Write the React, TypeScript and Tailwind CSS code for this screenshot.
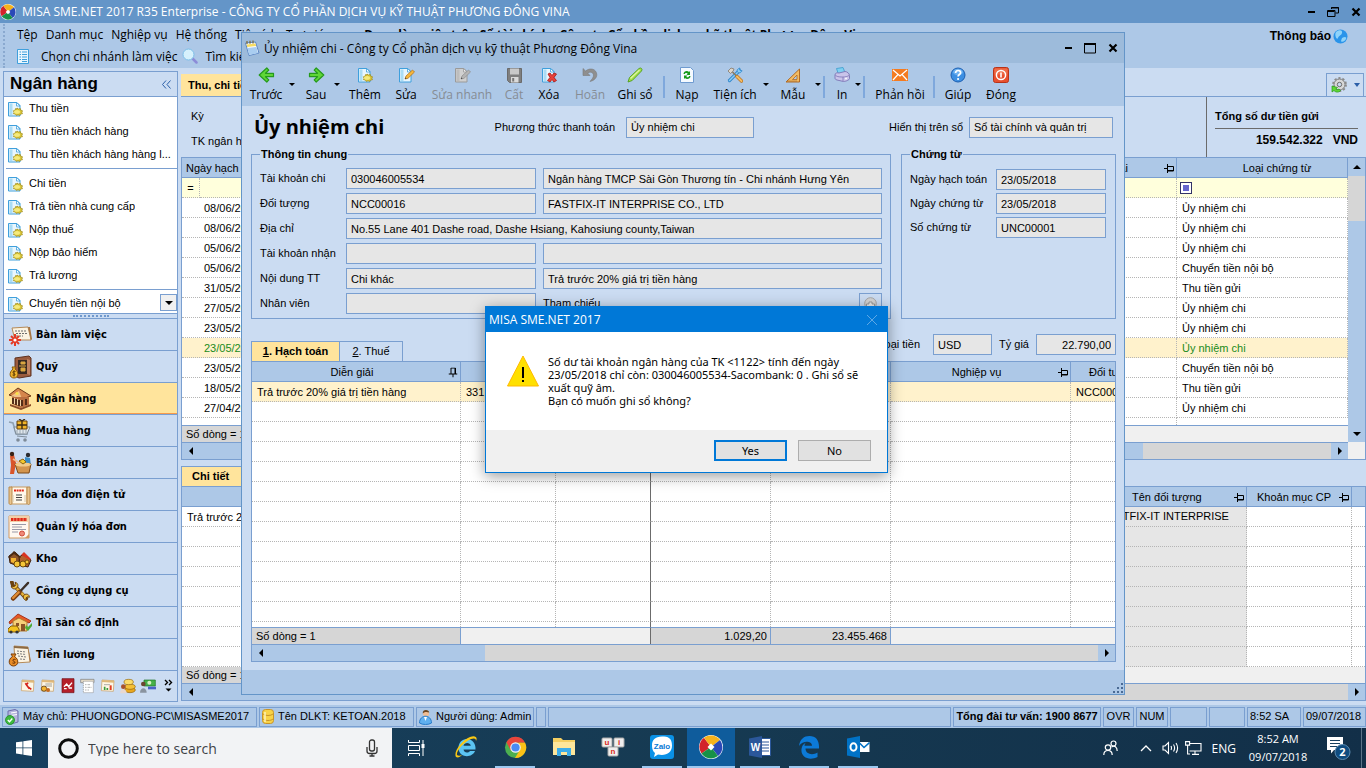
import React from "react";
import clsx from "clsx";

/* ---------- icons ---------- */

const DocBase = ({ gray = false }: { gray?: boolean }) => (
    <>
        <path d="M1.5 1.5h8.5l3 3v10.500h-11.500z" fill={gray ? "#d0d0d0" : "#e9f6fd"} stroke={gray ? "#9a9a9a" : "#3f9fdc"} />
        <path d="M2.500 2.500h3v11.500h-3z" fill={gray ? "#bdbdbd" : "#aadcf5"} />
        <path d="M9.500 1.500v3.500h3.500z" fill={gray ? "#eee" : "#fff"} stroke={gray ? "#9a9a9a" : "#3f9fdc"} strokeWidth=".8" />
    </>
);

const DocGear = ({ size = 16 }: { size?: number }) => (
    <svg width={size} height={size} viewBox="0 0 16 16" className="shrink-0">
        <DocBase />
        <path d="M10 7l1.400 1 2-.4.300 1.600 1.900.6-.8 1.400.7 1.500-2 .4-.8 1.300-1.700-.6-1.700.6-.9-1.300-2-.4.7-1.500-.8-1.400 1.900-.6.300-1.600 1.500.4z" fill="#dcc838" stroke="#9c8818" strokeWidth=".7" />
        <ellipse cx="10" cy="10.900" rx="3" ry="1.800" fill="#f5ea7c" />
    </svg>
);

const DocPencil = ({ gray = false }: { gray?: boolean }) => (
    <svg width="17" height="16" viewBox="0 0 17 16">
        <DocBase gray={gray} />
        <path d="M7 12l1-3 6.500-6 2 2-6.500 6.300z" fill={gray ? "#b5b5b5" : "#f6b73c"} stroke={gray ? "#8d8d8d" : "#b06a12"} strokeWidth=".7" />
        <path d="M7 12l.500-1.500 1 1z" fill="#333" />
    </svg>
);

const GreenArrow = ({ flip = false }: { flip?: boolean }) => (
    <svg width="17" height="16" viewBox="0 0 17 16" className={flip ? "-scale-x-100" : ""}>
        <path d="M15.500 6.300H7.500l3.300-3.200L8.800 1 1.200 8l7.600 7 2-2.100-3.300-3.200h8z" fill="#5fd636" stroke="#259a1c" strokeWidth="1.200" strokeLinejoin="round" />
    </svg>
);

const Floppy = () => (
    <svg width="15" height="15" viewBox="0 0 15 15">
        <path d="M.5.500h14v14h-12l-2-2z" fill="#7f7f7f" stroke="#6b6b6b" />
        <path d="M3 .500h9v6H3z" fill="#c9c9c9" />
        <path d="M4 9h7.500v5.500H4z" fill="#dadada" />
        <path d="M5.200 10h2v3.500h-2z" fill="#777" />
    </svg>
);

const DocDelete = () => (
    <svg width="16" height="16" viewBox="0 0 16 16">
        <DocBase />
        <path d="M7 7l2-1 2 2.500L13 6l2.500 1-2.500 3.500 2.500 3-2.500 1.500-2-2.500L9 15l-2.500-1.500 2.500-3z" fill="#e8413a" stroke="#a81814" strokeWidth=".8" />
    </svg>
);

const Undo = () => (
    <svg width="16" height="16" viewBox="0 0 16 16">
        <path d="M1 1.500v7h7L5.800 6.200c2-2 5.500-1 5.700 1.800.1 2.500-1.500 4-3.500 6.500 4.500-1 7-4 6.800-7C14.500 2 8 .2 3.600 4z" fill="#8f8f8f" stroke="#7a7a7a" strokeWidth=".6" />
    </svg>
);

const GreenPencil = () => (
    <svg width="16" height="16" viewBox="0 0 16 16">
        <path d="M1 15l1.500-4.500L12 1.500q1.500-1 2.500 0t0 2.500L5.200 13.500z" fill="#a4e04a" stroke="#4f9d1c" strokeWidth=".9" />
        <path d="M3.500 11.500l9-8.500" stroke="#dff5a8" strokeWidth="1.200" />
    </svg>
);

const Refresh = () => (
    <svg width="14" height="16" viewBox="0 0 14 16">
        <path d="M.5.500h10l3 3v12H.5z" fill="#f5faff" stroke="#6f9bd0" />
        <path d="M3.500 7c0-3 4-4 5.500-2l1-1v4H6.500l1.200-1.200C6.800 5.500 5 6 5 7z" fill="#159a1a" />
        <path d="M10.500 9c0 3-4 4-5.500 2l-1 1V8.500h3.500L6.300 9.700C7.200 10.800 9 10.300 9 9z" fill="#159a1a" />
    </svg>
);

const Tools = ({ size = 16, gold = false }: { size?: number; gold?: boolean }) => (
    <svg width={size} height={size} viewBox="0 0 16 16" className="shrink-0">
        {gold ? (
            <>
                <path d="M1.500 1l1 3.200 2 .6L13 14" stroke="#6b4310" strokeWidth="3" fill="none" strokeLinecap="round" />
                <path d="M4 4.500l9 9" stroke="#e4b13c" strokeWidth="1.800" />
                <path d="M14.500 1.500L7.500 9" stroke="#3c3028" strokeWidth="1.800" strokeLinecap="round" />
                <path d="M7.500 9L2.500 14" stroke="#7a3e12" strokeWidth="3.600" strokeLinecap="round" />
                <path d="M7 9l-4.500 4.500" stroke="#e08c34" strokeWidth="1.800" strokeLinecap="round" />
                <path d="M1 4c.5 2.500 3 3 4.500 1.500S6.500 1.500 4 1l.8 2-1.600 1.500z" fill="#f0c040" stroke="#6b4310" strokeWidth=".8" />
                <path d="M15.500 13c0-2.500-2.500-3-4-2s-1 4 1.500 4.500L12.800 13.500l1.200-.8z" fill="#f0c040" stroke="#6b4310" strokeWidth=".8" />
            </>
        ) : (
            <>
                <path d="M12.500 3.500L2.500 13.500" stroke="#2f86cc" strokeWidth="3.200" strokeLinecap="round" />
                <path d="M12.500 3.500L2.500 13.500" stroke="#8ccdf4" strokeWidth="1.500" strokeLinecap="round" />
                <path d="M15 3.500c-.5 2.500-3.500 3-4.500 1.500S10.500 1.500 13 1l-.5 1.800 1 1z" fill="#8ccdf4" stroke="#2f86cc" strokeWidth=".8" />
                <path d="M1 4l3-3 3 1-.8 2L3.500 6.500z" fill="#ddd6cc" stroke="#857a6a" strokeWidth=".8" />
                <path d="M5.500 5l4 4" stroke="#8a7a60" strokeWidth="1.600" />
                <path d="M10 9.500l4.500 4.500" stroke="#b8701c" strokeWidth="3.400" strokeLinecap="round" />
                <path d="M10 9.500l4.500 4.500" stroke="#f4bc62" strokeWidth="2" strokeLinecap="round" />
            </>
        )}
    </svg>
);

const SetSquare = () => (
    <svg width="16" height="15" viewBox="0 0 16 15">
        <path d="M14.500 1v13H1z" fill="#f4bc62" stroke="#b06b24" />
        <path d="M12 7v4.500H7.500z" fill="#adc8e7" stroke="#b06b24" strokeWidth=".8" />
        <path d="M3 13.500v-1M5 13.500v-1M7 13.500v-1M9 13.500v-1M11 13.500v-1" stroke="#7a4312" strokeWidth=".7" />
    </svg>
);

const Printer = () => (
    <svg width="16" height="16" viewBox="0 0 16 16">
        <path d="M2.500 1.500l6.500-1 2 5-6.500 2z" fill="#7fd0f2" stroke="#3c9ccc" strokeWidth=".8" />
        <path d="M1 8c0-2 2-2.500 4-2l6-1.500c2 0 4.500 2 4.500 4v3c0 1.500-4 3-6 3L3 13c-1.500-.5-2-1-2-2z" fill="#c9c4ea" stroke="#7c74b4" strokeWidth=".9" />
        <path d="M1.500 8.500c2 1.500 5 1.500 7.500 1.500v4M9 10c2 0 4.500-.5 6-1.500" stroke="#7c74b4" strokeWidth=".8" fill="none" />
        <circle cx="12" cy="11.500" r=".9" fill="#fff" />
    </svg>
);

const Mail = () => (
    <svg width="16" height="12" viewBox="0 0 16 12">
        <path d="M0 0h16v12H0z" fill="#f47b20" />
        <path d="M1 1l7 6 7-6M1 11l5-5.500M15 11l-5-5.500" stroke="#fff" strokeWidth="1.200" fill="none" />
    </svg>
);

const Help = () => (
    <svg width="16" height="16" viewBox="0 0 16 16">
        <circle cx="8" cy="8" r="7" fill="#3d8fe2" stroke="#1c5eb0" />
        <ellipse cx="8" cy="5" rx="5" ry="3.200" fill="#6cb0f0" />
        <path d="M5.600 6c0-3.300 5-3.300 5-.3 0 1.700-2.500 1.900-2.500 3.800" stroke="#fff" strokeWidth="1.700" fill="none" />
        <circle cx="8.100" cy="12" r="1.100" fill="#fff" />
    </svg>
);

const Power = () => (
    <svg width="16" height="16" viewBox="0 0 16 16">
        <rect x=".5" y=".5" width="15" height="15" rx="2" fill="#e8502e" stroke="#b93318" />
        <rect x="1.500" y="1.500" width="13" height="6" rx="1" fill="#ee6c48" />
        <circle cx="8" cy="8" r="4.600" fill="none" stroke="#fff" strokeWidth="1.500" />
        <path d="M8 5.500v5" stroke="#fff" strokeWidth="1.600" />
    </svg>
);

const MisaLogo = ({ size }: { size: number }) => (
    <svg width={size} height={size} viewBox="0 0 24 24" className="shrink-0">
        <circle cx="12" cy="12" r="12" fill="#fff" />
        <path d="M12 12L5 2.700A11.500 11.500 0 0 0 2.500 18.500z" fill="#d2232a" />
        <path d="M12 12L5 2.700A11.500 11.500 0 0 1 21 5z" fill="#f5b21c" />
        <path d="M12 12l9-7a11.500 11.500 0 0 1-2 16z" fill="#2a49b8" />
        <path d="M12 12l7 9A11.500 11.500 0 0 1 2.500 18.500z" fill="#179147" />
        <path d="M12 8.500l3.500 3.500-3.500 3.500L8.500 12z" fill="#fff" />
    </svg>
);

const Pin = ({ down = false }: { down?: boolean }) => (
    <svg width="10" height="9" viewBox="0 0 10 9" className={clsx("shrink-0", down && "-rotate-90")}>
        <path d="M0 4.500h3.500M3.500 0v9M3.500 2.500h6v4.500h-6M3.500 6.500h6" stroke="#000" fill="none" />
    </svg>
);

const Tri = ({ dir }: { dir: "left" | "right" | "up" | "down" }) => (
    <svg width="8" height="8" viewBox="0 0 8 8" className="shrink-0">
        {dir === "left" && <path d="M6 0v8L2 4z" />}
        {dir === "right" && <path d="M2 0v8l4-4z" />}
        {dir === "up" && <path d="M0 6h8L4 2z" />}
        {dir === "down" && <path d="M0 2h8L4 6z" />}
    </svg>
);

const WinButtons = ({ restore = false }: { restore?: boolean }) => (
    <div className="flex items-center gap-3">
        <button aria-label="Minimize">
            <svg width="8" height="12" viewBox="0 0 8 12"><path d="M1 6h7" stroke="#000" strokeWidth="2" /></svg>
        </button>
        <button aria-label="Maximize">
            <svg width="12" height="12" viewBox="0 0 12 12" fill="none" stroke="#000">
                {restore ? (
                    <>
                        <path d="M4.500 3V1.500h7v5.500H8.500M4 2h8" />
                        <path d="M.5 4.500h7.500v6H.500zM.500 5.500h7" />
                    </>
                ) : (
                    <path d="M.5 1v10h11V1M0 1.500h12M0 2.500h12" />
                )}
            </svg>
        </button>
        <button aria-label="Close">
            <svg width="10" height="12" viewBox="0 0 10 12"><path d="M1.500 2.500l7 7M8.500 2.500l-7 7" stroke="#000" strokeWidth="2.200" /></svg>
        </button>
    </div>
);

/* sidebar module pictures, 24x24 */
const paper = (
    <>
        <path d="M3 3l18 1-1 16-18-1z" fill="#fdf6e6" stroke="#c79a5a" />
        <path d="M3 3l18 1v3L3 6z" fill="#e0b878" />
    </>
);

const navIcons: Record<string, React.ReactNode> = {
    desk: (
        <>
            <path d="M4 5l16-1 3 13H7z" fill="#fbf3e2" stroke="#b58a58" />
            <path d="M20 4l3 13 1-1-2-12z" fill="#a87542" />
            <path d="M7 8h12M8 10.500h11M8 13h7" stroke="#6d6d6d" strokeDasharray="2 1" />
            <path d="M7 11v12M1 17h12M3 13l8 8M11 13l-8 8" stroke="#e53a24" strokeWidth="2" />
            <circle cx="7" cy="17" r="1.600" fill="#fff" />
        </>
    ),
    safe: (
        <>
            <path d="M7 3l14-2 2 2v18l-12 2-4-2z" fill="#9a5b3e" stroke="#5f3220" />
            <path d="M10 5h9v14h-9z" fill="#3a2a22" />
            <path d="M11 11h7M13 7h4v2h-4zM13 13h4v3h-4z" stroke="#d9a640" fill="#d9a640" />
            <path d="M19 4l3 1v15l-3-1z" fill="#c08260" />
            <path d="M4 12h4l-1 2c4 3 4 9-1 9s-5-6-1-9z" fill="#eeb22c" stroke="#8a5a0c" />
            <path d="M7.500 16.500c-3-1-3 1.500-1.500 2s1.500 2.500-1.500 1.500M6 15.500v6" stroke="#5e3c05" fill="none" />
        </>
    ),
    bank: (
        <>
            <path d="M1 9L10 2l13 8-9 3z" fill="#d5854c" stroke="#6e3818" />
            <path d="M3 10l8-5 3 8z" fill="#f1c38a" />
            <path d="M4 11h17v8l-8 3-9-4z" fill="#b96e40" />
            <path d="M5 12v6M8 13v6M11 14v6M14 14v6M18 13v6" stroke="#3c1f10" strokeWidth="1.600" />
            <path d="M6.500 12v6M9.500 13v6M12.500 14v6" stroke="#f0d4a8" />
            <path d="M2 18l11 4 10-4v2l-10 4-11-4z" fill="#8c4c28" />
            <circle cx="9" cy="7.500" r="1.600" fill="#f8e24a" />
        </>
    ),
    buy: (
        <>
            <path d="M1 3l4 1 3 11h12" stroke="#8fa0b0" strokeWidth="1.600" fill="none" />
            <path d="M6 8h16l-3 7H8z" fill="#dfe6ec" stroke="#7e8b98" />
            <path d="M9 2h10v8H9z" fill="#f0b429" stroke="#6a430a" />
            <path d="M14 2v8M9 6h10M11 0l3 2 3-2" stroke="#3c2a12" strokeWidth="1.400" fill="none" />
            <path d="M9 11v4M12 11v4M15 11v4M18 11v3" stroke="#9aa8b4" />
            <path d="M9 17l10 1" stroke="#7e8b98" />
            <circle cx="10" cy="21" r="1.800" fill="#7e8b98" />
            <circle cx="17" cy="21" r="1.800" fill="#7e8b98" />
        </>
    ),
    sell: (
        <>
            <path d="M2 5l4-1 2 8-2 11H2l1-9z" fill="#d9552a" />
            <circle cx="4" cy="3" r="2.200" fill="#3a2216" />
            <path d="M5 8l7 4M20 8l-6 4" stroke="#f0bd94" strokeWidth="1.800" />
            <path d="M17 6l5 1 1 8h-6z" fill="#3e8cc4" />
            <circle cx="20" cy="4" r="2.200" fill="#2c2c30" />
            <path d="M7 13h16l-2 9H10z" fill="#d3954e" stroke="#7c4a18" />
            <ellipse cx="15" cy="13.500" rx="8" ry="2" fill="#f3cd8c" />
            <path d="M11 10l4-2 3 3-3 2z" fill="#f4c92e" stroke="#8c650e" />
        </>
    ),
    einvoice: (
        <>
            <path d="M3 4h16v17H3z" fill="#fff8ea" stroke="#c89a5e" />
            <path d="M1 4h3v16c0 2-3 2-3 0zM19 4h3v16c0 2-3 2-3 0z" fill="#e8c48e" stroke="#b98a4c" />
            <path d="M6 7.500h10" stroke="#e02818" strokeWidth="2.200" strokeDasharray="2 .6" />
            <path d="M8 12h6M8 14.500h6M8 17h6" stroke="#444" strokeWidth="1.200" />
            <path d="M5 12v7M17 12v7" stroke="#d8c8a8" />
        </>
    ),
    invoice: (
        <>
            <path d="M1 1h20v22H1z" fill="#fff8f0" stroke="#d49a60" />
            <path d="M1 1h20v6H1z" fill="#f2cfa8" />
            <path d="M3 4.500h16" stroke="#e02818" strokeWidth="3" strokeDasharray="2.500 .6" />
            <path d="M4 9.500h14M4 12h10M4 14.500h14M4 17h6" stroke="#9a9aa8" />
            <circle cx="14" cy="18.500" r="2.500" fill="#ef8a7a" stroke="#cf4c3c" />
            <path d="M17 23l4-4v4z" fill="#d49a60" />
        </>
    ),
    warehouse: (
        <>
            <path d="M1 9l6-4 5 5-2 9-8-3z" fill="#8d5428" stroke="#3d200c" />
            <path d="M3 11h5v6l-5-2z" fill="#f2b431" />
            <path d="M11 10l5-3 7 6-3 7-8-2z" fill="#b4622c" stroke="#3d200c" />
            <path d="M0 10l6-6 7 6-1 1-6-4-5 4z" fill="#4a2a14" />
            <path d="M13 8l3-3 7 7-1 1z" fill="#d83422" />
            <circle cx="9" cy="17" r="3" fill="#f5c637" stroke="#6e4a0a" />
            <circle cx="15" cy="17" r="3" fill="#f5c637" stroke="#6e4a0a" />
            <circle cx="19" cy="15" r="2" fill="#f5c637" stroke="#6e4a0a" />
        </>
    ),
    house: (
        <>
            <path d="M1 11L10 3l13 7-2 2-11-5-8 6z" fill="#e65a28" stroke="#a8341a" />
            <path d="M5 10l6-3 8 4v9H5z" fill="#f6cf7a" stroke="#b47c2c" />
            <path d="M13 13h4v7h-4zM8 12h3v3H8z" fill="#8d5428" />
            <path d="M0 18l3-3h6l2 3v3H0z" fill="#f4c21e" stroke="#865c08" />
            <circle cx="3" cy="21" r="1.600" fill="#333" />
            <circle cx="9" cy="21" r="1.600" fill="#333" />
            <path d="M18 14l2 2 4-4v3l-4 5-3-3z" fill="#4dab3a" />
        </>
    ),
    salary: (
        <>
            <path d="M6 3l14 1 2 15-15 1z" fill="#fbf3e2" stroke="#b58a58" />
            <path d="M6 3l14 1v2L6 5z" fill="#8c6a44" />
            <path d="M9 8l9 1M9 10.500l9 1M10 13l8 1M12 16l6 .500" stroke="#7d7d7d" strokeDasharray="2 1" />
            <path d="M20 4l3 14-1 1z" fill="#a87542" />
            <path d="M3 11h5l-1.500 2.500c5 3 4 9.500-1 9.500s-6-6.500-1-9.500z" fill="#e88b25" stroke="#7a3e08" />
            <path d="M7.500 16.500c-3-1-3 1.500-1.500 2s1.500 2.500-1.500 1.500" stroke="#5e2c05" fill="none" />
        </>
    ),
};

const NavPic = ({ name }: { name: string }) => (
    <svg width="24" height="24" viewBox="0 0 24 24" className="shrink-0">{navIcons[name]}</svg>
);

const quickIcons = [
    <>{paper}<path d="M8 8l6 8M12 7l-3 4M13 14l4 3" stroke="#d42018" strokeWidth="2.500" /></>,
    <>{paper}<path d="M8 9h10M8 12h10" stroke="#777" /><circle cx="6" cy="16" r="4" fill="#f2b431" stroke="#3d200c" /><circle cx="12" cy="18" r="3" fill="#c46a20" /></>,
    <><path d="M3 1h18v21H3z" fill="#b5202a" stroke="#6e0e14" /><path d="M6 13l4-4 3 4 5-6M6 16h4M13 15h5" stroke="#fff" strokeWidth="2" fill="none" /></>,
    <><path d="M1 2h20v5H1z" fill="#e6dcc8" stroke="#777" /><path d="M5 5h15v17H5z" fill="#fff" stroke="#888" strokeDasharray="2 1" /><path d="M8 10h8M8 14h10M8 18h6" stroke="#555" strokeDasharray="1 1" /></>,
    <>{paper}<path d="M6 10h9" stroke="#888" /><path d="M7 18v-5M11 18v-3" stroke="#3a9b3a" strokeWidth="2.500" /><path d="M16 18v-7" stroke="#e03c24" strokeWidth="3" /></>,
    <><ellipse cx="15" cy="18" rx="8" ry="4" fill="#e9a820" stroke="#94640a" /><ellipse cx="15" cy="13" rx="8" ry="4" fill="#f4c038" stroke="#94640a" /><ellipse cx="13" cy="6" rx="7" ry="4" fill="#fbdc6a" stroke="#94640a" /><circle cx="5" cy="13" r="3.500" fill="#a8522c" /><path d="M0 23c0-8 10-8 10 0z" fill="#e8d8d0" /></>,
    <><path d="M6 3h17v9H6z" fill="#46b04a" stroke="#1d7424" /><circle cx="14" cy="7" r="3" fill="#d6f0c4" /><path d="M12 13h12v4H12z" fill="#4a62c8" /><circle cx="5" cy="9" r="3.500" fill="#6a4630" /><path d="M0 22c0-9 10-9 10 0z" fill="#8a94a0" /></>,
];

/* ---------- data ---------- */

const topList = ["Thu tiền", "Thu tiền khách hàng", "Thu tiền khách hàng hàng l..."];
const midList = ["Chi tiền", "Trả tiền nhà cung cấp", "Nộp thuế", "Nộp bảo hiểm", "Trả lương"];

const modules = [
    { label: "Bàn làm việc", icon: "desk" },
    { label: "Quỹ", icon: "safe" },
    { label: "Ngân hàng", icon: "bank" },
    { label: "Mua hàng", icon: "buy" },
    { label: "Bán hàng", icon: "sell" },
    { label: "Hóa đơn điện tử", icon: "einvoice" },
    { label: "Quản lý hóa đơn", icon: "invoice" },
    { label: "Kho", icon: "warehouse" },
    { label: "Công cụ dụng cụ", icon: "tools" },
    { label: "Tài sản cố định", icon: "house" },
    { label: "Tiền lương", icon: "salary" },
];

const vouchers = [
    ["08/06/2018", "Ủy nhiệm chi"],
    ["08/06/2018", "Ủy nhiệm chi"],
    ["05/06/2018", "Ủy nhiệm chi"],
    ["05/06/2018", "Chuyển tiền nội bộ"],
    ["31/05/2018", "Thu tiền gửi"],
    ["27/05/2018", "Ủy nhiệm chi"],
    ["23/05/2018", "Ủy nhiệm chi"],
    ["23/05/2018", "Ủy nhiệm chi"],
    ["23/05/2018", "Chuyển tiền nội bộ"],
    ["18/05/2018", "Thu tiền gửi"],
    ["27/04/2018", "Ủy nhiệm chi"],
];

type Tool = { kind: "btn" | "drop" | "sep"; w: string; label?: string; icon?: React.ReactNode; off?: boolean };

const tools: Tool[] = [
    { kind: "btn", w: "w-10", label: "Trước", icon: <GreenArrow /> },
    { kind: "drop", w: "w-3" },
    { kind: "btn", w: "w-9", label: "Sau", icon: <GreenArrow flip /> },
    { kind: "drop", w: "w-1.5" },
    { kind: "btn", w: "w-[50px]", label: "Thêm", icon: <DocGear /> },
    { kind: "btn", w: "w-8", label: "Sửa", icon: <DocPencil /> },
    { kind: "btn", w: "w-20", label: "Sửa nhanh", icon: <DocPencil gray />, off: true },
    { kind: "btn", w: "w-6", label: "Cất", icon: <Floppy />, off: true },
    { kind: "btn", w: "w-[46px]", label: "Xóa", icon: <DocDelete /> },
    { kind: "btn", w: "w-9", label: "Hoãn", icon: <Undo />, off: true },
    { kind: "btn", w: "w-[54px]", label: "Ghi sổ", icon: <GreenPencil /> },
    { kind: "sep", w: "w-1" },
    { kind: "btn", w: "w-[42px]", label: "Nạp", icon: <Refresh /> },
    { kind: "btn", w: "w-[54px]", label: "Tiện ích", icon: <Tools /> },
    { kind: "drop", w: "w-2" },
    { kind: "btn", w: "w-[46px]", label: "Mẫu", icon: <SetSquare /> },
    { kind: "drop", w: "w-1" },
    { kind: "sep", w: "w-2" },
    { kind: "btn", w: "w-7", label: "In", icon: <Printer /> },
    { kind: "drop", w: "w-1" },
    { kind: "sep", w: "w-2" },
    { kind: "btn", w: "w-16", label: "Phản hồi", icon: <Mail /> },
    { kind: "sep", w: "w-1" },
    { kind: "btn", w: "w-11", label: "Giúp", icon: <Help /> },
    { kind: "btn", w: "w-[42px]", label: "Đóng", icon: <Power /> },
];

/* ---------- shared parts ---------- */

const SIDE_LINK = "flex h-[23px] w-full items-center gap-1.5 pl-[3px] text-left";
const HEAD_CELL = "h-5 border-b border-r border-[#7a9fd0] bg-[#adc8e7] pt-0.5 pr-0.5 pl-1 font-normal";
const CELL = "h-5 border-b border-r border-dotted border-[#b5b5b5] px-[5px] pt-0.5 whitespace-nowrap overflow-hidden";

const HScroll = ({ before }: { before: string }) => (
    <div className="flex h-[18px] shrink-0 border-y border-[#7a9fd0] bg-[#adc8e7]">
        <button aria-label="Scroll left" className="flex w-[17px] items-center justify-center"><Tri dir="left" /></button>
        <div className={before} />
        <div className="flex-1 bg-[#d6d6d6]" />
        <button aria-label="Scroll right" className="flex w-[17px] items-center justify-center"><Tri dir="right" /></button>
    </div>
);

const Field = ({ id, value, className = "" }: { id: string; value: string; className?: string }) => (
    <input
        id={id}
        aria-label={id}
        readOnly
        defaultValue={value}
        className={clsx("h-[21px] min-w-0 border border-[#7a9fd0] bg-[#e6e6e6] px-1 outline-none", className)}
    />
);

/* ---------- main window ---------- */

const Sidebar = () => (
    <aside className="flex w-[175px] shrink-0 flex-col border border-[#7a9fd0]">
        <div className="flex h-[25px] items-center justify-between border-b border-[#7a9fd0] pr-1.5 pl-1.5">
            <h1 className="text-[17px] font-bold leading-5">Ngân hàng</h1>
            <button aria-label="Collapse" className="text-[#2b5fa8]">
                <svg width="9" height="9" viewBox="0 0 9 9" fill="none" stroke="currentColor"><path d="M4 .500l-3.500 4 3.500 4M8.500.500L5 4.500l3.500 4" /></svg>
            </button>
        </div>
        <div className="bg-white">
            <div className="pb-0.5">
                {topList.map((t) => (
                    <button key={t} className={SIDE_LINK}>
                        <DocGear /><span className="truncate">{t}</span>
                    </button>
                ))}
            </div>
            <div className="ml-0.5 border-y border-[#7a9fd0] pt-[3px] pb-0.5">
                {midList.map((t) => (
                    <button key={t} className="flex h-[23px] w-full items-center gap-1.5 pl-px text-left">
                        <DocGear /><span className="truncate">{t}</span>
                    </button>
                ))}
            </div>
            <div className="flex h-[23px] items-end">
                <button className="flex h-[19px] flex-1 items-center gap-1.5 pl-[3px] text-left"><DocGear />Chuyển tiền nội bộ</button>
                <button aria-label="More" className="mb-0.5 flex h-[17px] w-[17px] items-center justify-center border border-[#7a9fd0] bg-[#f0f0f0]"><Tri dir="down" /></button>
            </div>
        </div>
        <div className="flex h-[5px] items-center justify-center border-t border-[#7a9fd0]">
            <div className="h-0.5 w-9 border-t-2 border-dotted border-[#6f98cc]" />
        </div>
        <nav className="font-['DejaVu_Sans_Condensed','DejaVu_Sans',sans-serif] text-[11px] font-bold">
            {modules.map((m) => (
                <button
                    key={m.label}
                    className={clsx(
                        "flex h-8 w-full items-center gap-1 border-t border-[#7a9fd0] pl-1",
                        m.label === "Ngân hàng" && "border-b border-b-[#f59a4c] bg-[#ffe49c]"
                    )}
                >
                    {m.icon === "tools" ? <span className="flex w-6 justify-center"><Tools size={20} gold /></span> : <NavPic name={m.icon} />}
                    {m.label}
                </button>
            ))}
        </nav>
        <div className="flex flex-1 items-center justify-end gap-1 border-t border-[#7a9fd0] pr-1">
            {quickIcons.map((pic, i) => (
                <button key={i} aria-label={`Module ${i + 12}`}><svg width="16" height="16" viewBox="0 0 24 24">{pic}</svg></button>
            ))}
            <button aria-label="Configure" className="ml-1">
                <svg width="9" height="14" viewBox="0 0 9 14"><path d="M1 1l2.500 2.500L1 6M5 1l2.500 2.500L5 6" stroke="#000" strokeWidth="1.400" fill="none" /><path d="M1.500 9.500h6l-3 3z" /></svg>
            </button>
        </div>
    </aside>
);

const VoucherList = () => (
    <section className="flex flex-col">
        <div className="flex items-end justify-between border-b border-[#7a9fd0]">
            <button className="h-[22px] bg-[#ffe49c] px-[7px] font-bold">Thu, chi tiền</button>
            <button aria-label="Settings" className="mr-0.5 flex h-[23px] w-[38px] items-center justify-around border border-b-0 border-[#7a9fd0]">
                <svg width="16" height="16" viewBox="0 0 16 16">
                    <circle cx="8.500" cy="7.500" r="5.500" fill="#d8d8d8" stroke="#7b7b7b" />
                    <circle cx="8.500" cy="7.500" r="6.500" fill="none" stroke="#8b8b8b" strokeWidth="1.800" strokeDasharray="2.200 1.900" />
                    <circle cx="8.500" cy="7.500" r="2.200" fill="#cbdcf2" stroke="#6b6b6b" />
                    <path d="M1 9v6l2-1.500c2 2.300 5 2 6.500 0L8 12c-1.500 1-2.500.800-3.200 0L6.500 10.500z" fill="#5fd636" stroke="#259a1c" strokeWidth=".7" />
                </svg>
                <svg width="6" height="4" viewBox="0 0 6 4"><path d="M0 0h6L3 4z" fill="#2b5fa8" /></svg>
            </button>
        </div>
        <div className="flex h-[60px] justify-between">
            <div className="flex flex-col gap-2.5 pt-3 pl-2.5">
                <span>Kỳ</span>
                <span>TK ngân hàng</span>
            </div>
            <div className="w-40 border-l border-[#6b6b6b] pt-3 pr-2 pl-2 text-[12px] font-bold">
                <div className="border-b border-[#6b6b6b] pb-1 text-[11px]">Tổng số dư tiền gửi</div>
                <div className="flex justify-end gap-2.5 pt-1"><span>159.542.322</span><span>VND</span></div>
            </div>
        </div>
        <div className="flex border border-b-0 border-[#7a9fd0]">
            <div className="min-w-0 flex-1">
                <table className="w-full table-fixed border-separate border-spacing-0 bg-white">
                    <colgroup>
                        <col className="w-[18px]" />
                        <col className="w-[82px]" />
                        <col />
                        <col className="w-[171px]" />
                    </colgroup>
                    <thead>
                        <tr>
                            <th colSpan={2} className={clsx(HEAD_CELL, "text-left whitespace-nowrap")}>Ngày hạch toán</th>
                            <th className={HEAD_CELL}><span className="flex items-center justify-end gap-9">Diễn giải<Pin /></span></th>
                            <th className={HEAD_CELL}><span className="pl-7">Loại chứng từ</span></th>
                        </tr>
                    </thead>
                    <tbody>
                        <tr className="bg-[#ffffdc]">
                            <td className={clsx(CELL, "text-center")}>=</td>
                            <td className={CELL} />
                            <td className={CELL} />
                            <td className="h-5 border-r border-b border-dotted border-[#b5b5b5] pl-[3px]">
                                <span className="flex h-3 w-3 items-center justify-center border border-[#333366] bg-white">
                                    <span className="h-1.5 w-1.5 bg-[#6666cc]" />
                                </span>
                            </td>
                        </tr>
                        {vouchers.map(([date, type], i) => (
                            <tr key={i} className={i === 7 ? "bg-[#fff2cc] text-[#1a8a1a]" : ""}>
                                <td colSpan={2} className={clsx(CELL, "pl-[22px]")}>{date}</td>
                                <td className={CELL} />
                                <td className={CELL}>{type}</td>
                            </tr>
                        ))}
                        <tr>
                            <td colSpan={2} className="h-[7px]" />
                            <td className="border-r border-dotted border-[#b5b5b5]" />
                            <td />
                        </tr>
                    </tbody>
                    <tfoot>
                        <tr>
                            <td colSpan={2} className="h-4 border-t border-[#7a9fd0] bg-[#d6d6d6] pl-1 leading-4">Số dòng = 11</td>
                            <td colSpan={2} className="border-t border-[#7a9fd0] bg-[#f0f0f0]" />
                        </tr>
                    </tfoot>
                </table>
                <HScroll before="w-[81%]" />
            </div>
            <div className="flex w-[17px] shrink-0 flex-col items-center border-b border-[#7a9fd0] bg-[#adc8e7]">
                <button aria-label="Scroll up" className="flex h-[18px] items-center"><Tri dir="up" /></button>
                <div className="h-[45px] w-full bg-[#d6d6d6]" />
                <button aria-label="Scroll down" className="mt-auto flex h-[17px] items-center"><Tri dir="down" /></button>
                <div className="h-[17px] w-full bg-[#f0f0f0]" />
            </div>
        </div>
    </section>
);

const DetailList = () => (
    <section className="flex flex-1 flex-col">
        <div className="flex"><button className="h-5 w-[88px] border-t border-l border-[#7a9fd0] bg-[#ffe49c] pl-2.5 text-left font-bold">Chi tiết</button></div>
        <div className="border border-b-0 border-[#7a9fd0]">
            <table className="w-full table-fixed border-separate border-spacing-0 bg-white">
                <colgroup>
                    <col className="w-[300px]" />
                    <col />
                    <col className="w-[146px]" />
                    <col className="w-[105px]" />
                    <col className="w-[13px]" />
                </colgroup>
                <thead>
                    <tr>
                        <th className={HEAD_CELL} />
                        <th className={HEAD_CELL} />
                        <th className={HEAD_CELL}><span className="flex items-center justify-between pl-[27px]">Tên đối tượng<Pin /></span></th>
                        <th className={HEAD_CELL}><span className="flex items-center justify-between pl-1.5">Khoản mục CP<Pin /></span></th>
                        <th className="border-b border-[#7a9fd0] bg-[#adc8e7]" />
                    </tr>
                </thead>
                <tbody>
                    {[0, 1, 2, 3, 4, 5, 6, 7].map((r) => (
                        <tr key={r}>
                            <td className={CELL}>{r === 0 && "Trả trước 20% giá trị tiền hàng"}</td>
                            <td className={CELL} />
                            <td className="h-5 border-r border-b border-dotted border-[#b5b5b5] bg-[#e6e6e6] pl-px whitespace-nowrap">{r === 0 && "FASTFIX-IT INTERPRISE"}</td>
                            <td className={CELL} />
                            <td className="border-b border-dotted border-[#b5b5b5]" />
                        </tr>
                    ))}
                </tbody>
                <tfoot>
                    <tr>
                        <td className="h-4 bg-[#d6d6d6] pl-1 leading-4">Số dòng = 1</td>
                        <td colSpan={4} className="bg-[#f0f0f0]" />
                    </tr>
                </tfoot>
            </table>
            <HScroll before="w-[44%]" />
        </div>
    </section>
);

const STATUS_BOX = "flex h-5 items-center border border-[#7a9fd0] whitespace-nowrap";

const StatusBar = () => (
    <footer className="flex h-[23px] shrink-0 items-center gap-0.5 bg-[#adc8e7] pl-0.5">
        <div className={clsx(STATUS_BOX, "w-[255px] gap-1 pl-0.5")}>
            <svg width="14" height="16" viewBox="0 0 14 16">
                <path d="M3 2l7-1.500L13 2v11l-7 2-3-2z" fill="#b4b4dc" stroke="#6c6cac" />
                <path d="M6 4l6-1M6 6.500l6-1" stroke="#fff" />
                <circle cx="5" cy="11" r="4.500" fill="#3fb93f" stroke="#1f8a24" strokeWidth=".8" />
                <path d="M2.800 11l1.700 1.800L7.300 9.500" stroke="#fff" strokeWidth="1.400" fill="none" />
            </svg>
            Máy chủ: PHUONGDONG-PC\MISASME2017
        </div>
        <div className={clsx(STATUS_BOX, "w-[155px] gap-1 pl-0.5")}>
            <svg width="12" height="15" viewBox="0 0 12 15">
                <rect x=".5" y=".5" width="11" height="14" rx="3" fill="#f8d348" stroke="#c8942a" />
                <path d="M1 5c2 2 8 2 10 0M1 10c2 2 8 2 10 0" stroke="#c8942a" fill="none" />
                <path d="M3 3v10" stroke="#fff3b8" strokeWidth="1.500" />
            </svg>
            Tên DLKT: KETOAN.2018
        </div>
        <div className={clsx(STATUS_BOX, "w-[118px] gap-1 pl-0.5")}>
            <svg width="13" height="16" viewBox="0 0 13 16">
                <circle cx="7" cy="4.500" r="3" fill="#f0bd94" />
                <path d="M3.800 4.500C3 0 10 0 10.300 3.500 8 3 6 2.500 3.800 4.500z" fill="#6a4620" />
                <path d="M.5 14c0-9 12-9 12 0-3 2-9 2-12 0z" fill="#5fb0f0" stroke="#2a7cc8" />
                <path d="M5 8l1.500 4L8 8z" fill="#fff" />
            </svg>
            Người dùng: Admin
        </div>
        <div className={clsx(STATUS_BOX, "w-2.5")} />
        <div className={clsx(STATUS_BOX, "flex-1")} />
        <div className={clsx(STATUS_BOX, "w-[148px] justify-center font-bold")}>Tổng đài tư vấn: 1900 8677</div>
        <div className={clsx(STATUS_BOX, "w-[31px] justify-center")}>OVR</div>
        <div className={clsx(STATUS_BOX, "w-8 justify-center")}>NUM</div>
        <div className={clsx(STATUS_BOX, "w-[37px]")} />
        <div className={clsx(STATUS_BOX, "w-9")} />
        <div className={clsx(STATUS_BOX, "w-[54px] pl-0.5")}>8:52 SA</div>
        <div className={clsx(STATUS_BOX, "w-[63px] pl-0.5")}>09/07/2018</div>
    </footer>
);

/* ---------- payment order window ---------- */

const info = [
    { label: "Tài khoản chi", a: "030046005534", b: "Ngân hàng TMCP Sài Gòn Thương tín - Chi nhánh Hưng Yên" },
    { label: "Đối tượng", a: "NCC00016", b: "FASTFIX-IT INTERPRISE CO., LTD" },
    { label: "Địa chỉ", wide: "No.55 Lane 401 Dashe road, Dashe Hsiang, Kahosiung county,Taiwan" },
    { label: "Tài khoản nhận", a: "", b: "" },
    { label: "Nội dung TT", a: "Chi khác", b: "Trả trước 20% giá trị tiền hàng" },
];

const dates = [
    ["Ngày hạch toán", "23/05/2018"],
    ["Ngày chứng từ", "23/05/2018"],
    ["Số chứng từ", "UNC00001"],
];

const PaymentWindow = () => (
    <div className="absolute top-8 right-[241px] left-[241px] flex flex-col border border-[#6495c8] bg-[#cbdcf2]">
        <header className="flex h-[30px] items-center gap-1 bg-[#9dbbdb] pr-1.5 pl-0.5 font-['Open_Sans',sans-serif] text-[12px]">
            <svg width="16" height="17" viewBox="0 0 16 17">
                <path d="M1.500 3l10-1 3.500 11-10 2.500z" fill="#fff" stroke="#5b86c4" />
                <path d="M2.500 4.500l9-1 .7 2.500-9 1z" fill="#f6dc62" />
                <path d="M3 4V1M6 3.700v-3M9 3.500v-3" stroke="#7a6a3a" strokeWidth="1.200" />
                <path d="M3.500 8l1.500 7 9-2-1.500-6z" fill="#a9cdf0" />
            </svg>
            <span className="flex-1">Ủy nhiệm chi - Công ty Cổ phần dịch vụ kỹ thuật Phương Đông Vina</span>
            <WinButtons />
        </header>
        <div className="flex h-[43px] bg-[#adc8e7] pl-1 font-['Open_Sans',sans-serif] text-[12px]">
            {tools.map((t, i) => {
                if (t.kind === "sep") return <div key={i} className={clsx(t.w, "flex shrink-0 items-center justify-center pt-1")}><span className="h-[22px] w-0.5 bg-[#7fa8dc]" /></div>;
                if (t.kind === "drop")
                    return (
                        <button key={i} aria-label="Open menu" className={clsx(t.w, "flex shrink-0 items-center justify-center")}>
                            <svg width="6" height="4" viewBox="0 0 6 4" className="shrink-0"><path d="M0 0h6L3 3z" /></svg>
                        </button>
                    );
                return (
                    <button key={i} disabled={t.off} className={clsx(t.w, "flex shrink-0 flex-col items-center whitespace-nowrap pt-1", t.off && "text-[#868c94]")}>
                        <span className="flex h-4 items-center">{t.icon}</span>
                        <span className="mt-1 leading-4">{t.label}</span>
                    </button>
                );
            })}
        </div>

        <div className="pr-2 pl-[9px]">
            <div className="flex h-[42px] items-center">
                <h2 className="flex-1 pl-[3px] font-['Open_Sans',sans-serif] text-[20px] font-bold leading-6">Ủy nhiệm chi</h2>
                <label htmlFor="Phương thức thanh toán" className="pr-[11px]">Phương thức thanh toán</label>
                <Field id="Phương thức thanh toán" value="Ủy nhiệm chi" className="mr-[135px] w-32" />
                <label htmlFor="Hiển thị trên sổ" className="pr-[6px]">Hiển thị trên sổ</label>
                <Field id="Hiển thị trên sổ" value="Sổ tài chính và quản trị" className="mr-[3px] w-36" />
            </div>

            <div className="flex gap-2.5">
                <fieldset className="min-w-0 flex-1 border border-[#7a9fd0] px-2 pb-1">
                    <legend className="px-[1px] font-bold leading-3">Thông tin chung</legend>
                    <div className="flex flex-col gap-1 pt-2">
                        {info.map((r) => (
                            <div key={r.label} className="flex items-center gap-[7px]">
                                <label htmlFor={r.label} className="w-[79px] shrink-0 whitespace-nowrap">{r.label}</label>
                                {r.wide ? (
                                    <Field id={r.label} value={r.wide} className="flex-1" />
                                ) : (
                                    <>
                                        <Field id={r.label} value={r.a ?? ""} className="w-[190px] shrink-0" />
                                        <Field id={`${r.label} - tên`} value={r.b ?? ""} className="flex-1" />
                                    </>
                                )}
                            </div>
                        ))}
                        <div className="flex items-center gap-[7px]">
                            <label htmlFor="Nhân viên" className="w-[79px] shrink-0">Nhân viên</label>
                            <Field id="Nhân viên" value="" className="w-[190px] shrink-0" />
                            <span className="flex-1">Tham chiếu</span>
                            <button aria-label="Thêm tham chiếu" className="flex h-[21px] w-[23px] items-center justify-center border border-[#7a9fd0]">
                                <svg width="13" height="13" viewBox="0 0 13 13"><circle cx="6.500" cy="6.500" r="5.800" fill="#d4d4d4" stroke="#a4a4a4" /><path d="M5 5h3v2h2.500v3H8v2H5v-2H2.500V7H5z" fill="#eee" stroke="#8c8c8c" strokeWidth=".8" /></svg>
                            </button>
                        </div>
                    </div>
                </fieldset>
                <fieldset className="w-[215px] border border-[#7a9fd0] pr-[9px] pl-2">
                    <legend className="px-[1px] font-bold leading-3">Chứng từ</legend>
                    <div className="flex flex-col gap-[3px] pt-[9px]">
                        {dates.map(([label, value]) => (
                            <div key={label} className="flex items-center justify-between">
                                <label htmlFor={label}>{label}</label>
                                <Field id={label} value={value} className="w-[110px]" />
                            </div>
                        ))}
                    </div>
                </fieldset>
            </div>

            <div className="flex items-end justify-between pt-[15px]">
                <div className="flex" role="tablist">
                    <button role="tab" aria-selected="true" className="h-5 w-[89px] border border-b-0 border-[#7a9fd0] bg-[#ffe49c] font-bold"><u>1</u>. Hạch toán</button>
                    <button role="tab" aria-selected="false" className="h-5 w-[63px] border border-b-0 border-l-0 border-[#7a9fd0]"><u>2</u>. Thuế</button>
                </div>
                <div className="mb-1.5 flex items-center gap-[7px]">
                    <label htmlFor="Loại tiền" className="mr-1.5">Loại tiền</label>
                    <Field id="Loại tiền" value="USD" className="w-[59px]" />
                    <label htmlFor="Tỷ giá">Tỷ giá</label>
                    <Field id="Tỷ giá" value="22.790,00" className="w-20 text-right" />
                </div>
            </div>

            <div className="mb-2 overflow-hidden border border-b-0 border-[#7a9fd0]">
                <table className="w-full table-fixed border-separate border-spacing-0 bg-white">
                    <colgroup>
                        <col className="w-[209px]" />
                        <col className="w-[95px]" />
                        <col className="w-[95px]" />
                        <col className="w-[120px]" />
                        <col className="w-[120px]" />
                        <col className="w-[180px]" />
                        <col />
                    </colgroup>
                    <thead>
                        <tr>
                            <th className={HEAD_CELL}><span className="flex items-center"><span className="flex-1">Diễn giải</span><Pin down /></span></th>
                            <th className={HEAD_CELL} />
                            <th className={HEAD_CELL} />
                            <th className={HEAD_CELL} />
                            <th className={HEAD_CELL}><span className="flex justify-end"><Pin /></span></th>
                            <th className={HEAD_CELL}><span className="flex items-center"><span className="flex-1">Nghiệp vụ</span><Pin /></span></th>
                            <th className="h-5 overflow-hidden border-b border-[#7a9fd0] bg-[#adc8e7] pt-0.5 pl-[18px] text-left font-normal whitespace-nowrap">Đối tượng</th>
                        </tr>
                    </thead>
                    <tbody>
                        {[0, 1, 2, 3, 4, 5, 6, 7, 8, 9, 10, 11].map((r) => (
                            <tr key={r} className={r === 0 ? "bg-[#fff2cc]" : ""}>
                                <td className={CELL}>{r === 0 && "Trả trước 20% giá trị tiền hàng"}</td>
                                <td className={CELL}>{r === 0 && "331"}</td>
                                <td className="h-5 border-r border-b border-r-[#6b6b6b] border-b-[#b5b5b5] [border-bottom-style:dotted]" />
                                <td className={CELL} />
                                <td className={CELL} />
                                <td className={CELL} />
                                <td className="h-5 overflow-hidden border-b border-dotted border-[#b5b5b5] pt-0.5 pl-[5px] whitespace-nowrap">{r === 0 && "NCC00016"}</td>
                            </tr>
                        ))}
                        <tr>
                            <td className="h-[5px] border-r border-dotted border-[#b5b5b5]" />
                            <td className="border-r border-dotted border-[#b5b5b5]" />
                            <td className="border-r border-[#6b6b6b]" />
                            <td className="border-r border-dotted border-[#b5b5b5]" />
                            <td className="border-r border-dotted border-[#b5b5b5]" />
                            <td className="border-r border-dotted border-[#b5b5b5]" />
                            <td />
                        </tr>
                    </tbody>
                    <tfoot>
                        <tr>
                            <td className="h-[17px] border-t border-r border-[#7a9fd0] bg-[#d6d6d6] pl-1">Số dòng = 1</td>
                            <td className="border-t border-[#7a9fd0] bg-[#f0f0f0]" />
                            <td className="border-t border-r border-t-[#7a9fd0] border-r-[#6b6b6b] bg-[#f0f0f0]" />
                            <td className="border-t border-r border-[#7a9fd0] bg-[#d6d6d6] pr-[3px] text-right">1.029,20</td>
                            <td className="border-t border-r border-[#7a9fd0] bg-[#d6d6d6] pr-[3px] text-right">23.455.468</td>
                            <td className="border-t border-[#7a9fd0] bg-[#f0f0f0]" />
                            <td className="border-t border-[#7a9fd0] bg-[#f0f0f0]" />
                        </tr>
                    </tfoot>
                </table>
                <HScroll before="w-[25%]" />
            </div>
        </div>
        <div className="flex h-6 items-end justify-end bg-[#adc8e7]">
            <svg width="12" height="12" viewBox="0 0 12 12" fill="#4a6a94"><path d="M9 1h2v2H9zM9 5h2v2H9zM9 9h2v2H9zM5 5h2v2H5zM5 9h2v2H5zM1 9h2v2H1z" /></svg>
        </div>
    </div>
);

const ConfirmDialog = () => (
    <div role="alertdialog" aria-labelledby="dlg-title" className="absolute top-[306px] left-[485px] w-[403px] border border-[#0078d7] bg-white shadow-[0_3px_14px_rgba(0,0,0,0.4)]">
        <div className="flex h-[25px] items-center justify-between bg-[#0078d7] pr-2.5 pl-[3px] font-['Open_Sans',sans-serif] text-[12px] text-white">
            <span id="dlg-title">MISA SME.NET 2017</span>
            <button aria-label="Close"><svg width="10" height="10" viewBox="0 0 10 10" stroke="#5ea8e6"><path d="M0 0l10 10M10 0L0 10" /></svg></button>
        </div>
        <div className="flex h-[98px] items-start gap-[9px] pt-[23px] pl-[21px] font-['Noto_Sans',sans-serif] text-[11px] leading-[13px]">
            <svg width="32" height="32" viewBox="0 0 32 32" className="shrink-0">
                <path d="M16 1l15.500 30H.5z" fill="#ffe000" stroke="#ffb900" strokeLinejoin="round" />
                <path d="M15 12h2v11h-2zM15 25h2v2h-2z" />
            </svg>
            <p className="pr-4">
                Số dư tài khoản ngân hàng của TK &lt;1122&gt; tính đến ngày<br />
                23/05/2018 chỉ còn: 030046005534-Sacombank: 0 . Ghi sổ sẽ<br />
                xuất quỹ âm.<br />
                Bạn có muốn ghi sổ không?
            </p>
        </div>
        <div className="flex h-[42px] items-center justify-end gap-[11px] bg-[#f0f0f0] pr-4 pb-px font-['Noto_Sans',sans-serif] text-[11px]">
            <button className="h-[21px] w-[73px] border-2 border-[#0078d7] bg-[#e1e1e1] leading-4">Yes</button>
            <button className="h-[21px] w-[73px] border border-[#adadad] bg-[#e1e1e1] leading-4">No</button>
        </div>
    </div>
);

/* ---------- taskbar ---------- */

const apps = [
    {
        name: "Internet Explorer", open: false,
        icon: <svg width="24" height="24" viewBox="0 0 24 24"><path d="M21.500 14.500H9.500c.5 3.500 4.500 4 6.500 1.500h5C18.500 23 6 23.500 4.500 14 4 7 9 3.500 13.500 4c5 .5 8.500 4.500 8 10.500zM9.500 10.800h7.300c-.5-3.500-6.500-4-7.300 0z" fill="#5bc4f2" fillRule="evenodd" /><path d="M2 22C-1 17 8 5 16 2c5-2 8 0 6 4 0-3-2-3-5-2C10 7 2 16 3 20c1 1 3 1 5 0-2 2-4 3-6 2z" fill="#f9c814" /></svg>,
    },
    {
        name: "Chrome", open: true,
        icon: <svg width="23" height="23" viewBox="0 0 24 24"><circle cx="12" cy="12" r="11" fill="#4caf50" /><path d="M2.500 6.500A11 11 0 0 1 22 7H12l-5 8z" fill="#e8453c" /><path d="M22 7a11 11 0 0 1-10.500 16l5-8.500L15 7z" fill="#fbc116" /><circle cx="12" cy="12" r="5.500" fill="#f2f2f2" /><circle cx="12" cy="12" r="4.300" fill="#4a8af4" /></svg>,
    },
    {
        name: "File Explorer", open: false,
        icon: <svg width="22" height="20" viewBox="0 0 22 20"><path d="M0 1h8l2 2h12v15H0z" fill="#f4cf62" /><path d="M0 5h22v13H0z" fill="#fde69b" /><path d="M4 11h14v8h-4v-4H8v4H4z" fill="#3cadea" /></svg>,
    },
    {
        name: "UniKey", open: false,
        icon: <svg width="24" height="20" viewBox="0 0 24 20"><g fill="#f0eeee" stroke="#aaa"><rect x="1" y="1" width="10" height="9" rx="1" /><rect x="13" y="1" width="10" height="9" rx="1" /><rect x="7" y="10" width="10" height="9" rx="1" /></g><g fill="#d82820" fontSize="8" fontWeight="bold" fontFamily="Liberation Sans, sans-serif" textAnchor="middle"><text x="6" y="8">u</text><text x="18" y="8">i</text><text x="12" y="17">n</text></g></svg>,
    },
    {
        name: "Zalo", open: true,
        icon: <svg width="24" height="24" viewBox="0 0 24 24"><rect width="24" height="24" rx="3" fill="#0a91e6" /><path d="M12 1.500C5 1.500 2 5 2 10.500c0 3.500 1 6 3 7.500l-1 4 4-2.500c8 1.500 14-1.500 14-9s-4-9-10-9z" fill="#fff" /><text x="12" y="13.500" fontSize="8" fontWeight="bold" fill="#0a7ad6" fontFamily="Liberation Sans, sans-serif" textAnchor="middle">Zalo</text></svg>,
    },
    { name: "MISA", open: true, icon: <MisaLogo size={24} /> },
    {
        name: "Word", open: true,
        icon: <svg width="22" height="22" viewBox="0 0 22 22"><path d="M11 2.500h10.500v17H11z" fill="#fff" stroke="#2b579a" /><path d="M13 6h7M13 9h7M13 12h7M13 15h7" stroke="#2b579a" strokeWidth="1.200" /><path d="M0 2.500L13 0v22L0 19.500z" fill="#2b579a" /><text x="6.500" y="14.500" fontSize="10" fontWeight="bold" fill="#fff" fontFamily="Liberation Sans, sans-serif" textAnchor="middle">W</text></svg>,
    },
    {
        name: "Edge", open: true,
        icon: <svg width="22" height="23" viewBox="0 0 22 23"><path d="M1 10C2 3 6 0 11.500 0 18 0 21.500 4.500 21 12.500H7.500c0 6 7.500 7 12 4v4.500c-8 4-17 .5-16-8 .3-3 2-5.200 4.500-6.500-1 1-1.500 2.200-1.500 3.200H14C14 5 5 4 1 10z" fill="#0c7ad8" /></svg>,
    },
    {
        name: "Outlook", open: true,
        icon: <svg width="23" height="22" viewBox="0 0 23 22"><path d="M12 6h10.500v10H12z" fill="#fff" /><path d="M12 6.500l5 5 5.500-5" stroke="#0072c6" strokeWidth="1.600" fill="none" /><path d="M0 2.500L13 0v22L0 19.500z" fill="#0072c6" /><ellipse cx="6.500" cy="11" rx="3" ry="3.800" fill="none" stroke="#fff" strokeWidth="2" /></svg>,
    },
];

const Taskbar = () => (
    <footer className="flex h-10 shrink-0 bg-linear-to-r from-[#17405f] via-[#163a52] to-[#122f48] font-['Open_Sans',sans-serif] text-white">
        <button aria-label="Start" className="flex w-12 items-center justify-center">
            <svg width="16" height="16" viewBox="0 0 16 16" fill="#fff"><path d="M0 2.300L6.500 1.400v6.100H0zM7.300 1.300L16 0v7.500H7.300zM0 8.300h6.500v6.200L0 13.600zM7.300 8.300H16V16l-8.700-1.300z" /></svg>
        </button>
        <label className="flex w-[344px] items-center bg-[#f2f3f5] pr-3.5 pl-2.5 text-[#3f4347]">
            <svg width="21" height="21" viewBox="0 0 21 21"><circle cx="10.500" cy="10.500" r="8.800" fill="none" stroke="#0c0c0c" strokeWidth="3" /></svg>
            <input aria-label="Search" placeholder="Type here to search" className="min-w-0 flex-1 pl-[9px] text-[14px] outline-none placeholder:text-[#3f4347]" />
            <svg width="12" height="18" viewBox="0 0 12 18" fill="none" stroke="#333" strokeWidth="1.300"><rect x="3.500" y="1" width="5" height="11" rx="2" /><path d="M1 8v4q0 2.500 2.500 2.500h5Q11 14.500 11 12V8M6 14.500V17M3.500 17h5" /></svg>
        </label>
        <button aria-label="Task view" className="flex w-12 items-center justify-center">
            <svg width="17" height="16" viewBox="0 0 17 16" fill="none" stroke="#fff"><path d="M.5 0v2.500h11V0M.5 5.500h11v5H.500zM.500 16v-2.500h11V16M15 0v16" /><path d="M15 4v4" strokeWidth="3" /></svg>
        </button>
        <div className="flex gap-[1px] pl-0.5">
            {apps.map((a) => (
                <button key={a.name} aria-label={a.name} className={clsx("flex w-12 flex-col items-center", a.name === "MISA" && "bg-[#0f5c9c]")}>
                    <span className="flex flex-1 items-center">{a.icon}</span>
                    <span className={clsx("h-0.5", a.name === "MISA" ? "w-12" : "w-10", a.open ? "bg-[#9cc8f0]" : "bg-transparent")} />
                </button>
            ))}
        </div>
        <div className="ml-auto flex items-center text-[11px]">
            <svg width="15" height="16" viewBox="0 0 15 16" fill="none" stroke="#fff" strokeWidth="1.200"><circle cx="5" cy="7.500" r="2.700" /><path d="M.8 15c0-6 8.400-6 8.400 0" /><circle cx="10.500" cy="3.500" r="2.500" /><path d="M8.500 7c3-2 5.700 0 5.700 4" /></svg>
            <svg width="12" height="7" viewBox="0 0 12 7" fill="none" stroke="#fff" strokeWidth="1.300" className="ml-[22px]"><path d="M1 6l5-5 5 5" /></svg>
            <svg width="17" height="14" viewBox="0 0 17 14" fill="none" stroke="#fff" strokeWidth="1.100" className="ml-2.5"><path d="M1 5h2l3.500-3.500v11L3 9H1zM9 5q1 2 0 4M11.500 3.500q2.200 3.500 0 7M14 2q3.200 5 0 10" /></svg>
            <svg width="17" height="14" viewBox="0 0 17 14" fill="none" stroke="#fff" strokeWidth="1.100" className="ml-1.5"><path d="M5 2.500h11v7.500H4.500M10 10v3M7 13.400h7M.6.600h4v3.500h-4zM2.600 4.100V13H5" /></svg>
            <span className="ml-2.5 text-[12px]">ENG</span>
            <div className="ml-3 w-[60px] text-center text-[11px] leading-[18px]">8:52 AM<br />09/07/2018</div>
            <button aria-label="Notifications" className="ml-[18px] flex">
                <svg width="25" height="26" viewBox="0 0 25 26"><path d="M1 2h16v13H8l-3 3.500V15H1z" fill="#fff" /><path d="M4 5.500h10M4 8.500h10M4 11.500h7" stroke="#17405f" /><circle cx="16.500" cy="17" r="7.500" fill="#0f4c80" stroke="#5d8bb0" /><text x="16.500" y="21" fontSize="11" fontWeight="bold" fill="#fff" textAnchor="middle">2</text></svg>
            </button>
            <div className="ml-2.5 h-10 w-[5px] border-l border-[#5b7488]" />
        </div>
    </footer>
);

export default function App() {
    return (
        <div className="relative flex min-h-screen flex-col overflow-hidden bg-[#cbdcf2] font-['Liberation_Sans',sans-serif] text-[11px] leading-[15px] text-black">
            <header className="flex h-[23px] items-center gap-1.5 bg-[#6495c8] pr-[5px] font-['Open_Sans',sans-serif] text-[12px] text-white">
                <MisaLogo size={16} />
                <span className="flex-1">MISA SME.NET 2017 R35 Enterprise - CÔNG TY CỔ PHẦN DỊCH VỤ KỸ THUẬT PHƯƠNG ĐÔNG VINA</span>
                <WinButtons restore />
            </header>
            <div className="flex h-[45px] justify-between bg-[#adc8e7] font-['Open_Sans',sans-serif] text-[12px]">
                <div className="flex gap-3 pt-px pl-[3px]">
                    <div className="w-0.5 border-l-2 border-dotted border-[#8aa9cf]" />
                    <div>
                        <nav className="flex h-[21px] items-center gap-2 whitespace-nowrap">
                            <button>Tệp</button>
                            <button>Danh mục</button>
                            <button>Nghiệp vụ</button>
                            <button>Hệ thống</button>
                            <button>Tiện ích</button>
                            <button>Trợ giúp</button>
                            <span className="pl-6 font-bold">Đang làm việc trên Sổ tài chính - Công ty Cổ phần dịch vụ kỹ thuật Phương Đông Vina</span>
                        </nav>
                        <div className="flex h-[22px] items-center">
                            <svg width="12" height="15" viewBox="0 0 12 15"><path d="M.5.500h11v14H.5z" fill="#e9f6fd" stroke="#3f9fdc" /><path d="M2.500 3h1.500M2.500 5.500h1.500M2.500 8h1.500M2.500 10.500h1.500M5 3h5M5 5.500h5M5 8h5M5 10.500h5M5 12.500h5" stroke="#3f9fdc" /></svg>
                            <button className="pl-3">Chọn chi nhánh làm việc</button>
                            <svg width="16" height="16" viewBox="0 0 16 16" className="ml-1"><path d="M10 10l4.500 4.500" stroke="#8c8cd8" strokeWidth="2.500" strokeLinecap="round" /><circle cx="6.500" cy="6.500" r="5.500" fill="#d6f1fc" stroke="#7cbfe8" /></svg>
                            <button className="pl-2">Tìm kiếm</button>
                        </div>
                    </div>
                </div>
                <button className="flex h-[27px] items-center gap-0.5 pr-[18px] font-['Liberation_Sans',sans-serif] font-bold">
                    Thông báo
                    <svg width="15" height="15" viewBox="0 0 15 15"><circle cx="7.500" cy="7.500" r="7" fill="#2a94ea" /><path d="M3 3c3-3 7-2 6 1S6 6 5 9 1 6 3 3zM9 9c3-2 5-1 4 1s-4 4-5 2z" fill="#8fd3fa" /></svg>
                </button>
            </div>
            <div className="flex flex-1 gap-[3px] pl-[3px] pt-[3px] pb-[3px]">
                <Sidebar />
                <main className="flex min-w-0 flex-1 flex-col gap-[6px] pt-[2px]">
                    <VoucherList />
                    <DetailList />
                </main>
            </div>
            <StatusBar />
            <Taskbar />
            <PaymentWindow />
            <ConfirmDialog />
        </div>
    );
}
